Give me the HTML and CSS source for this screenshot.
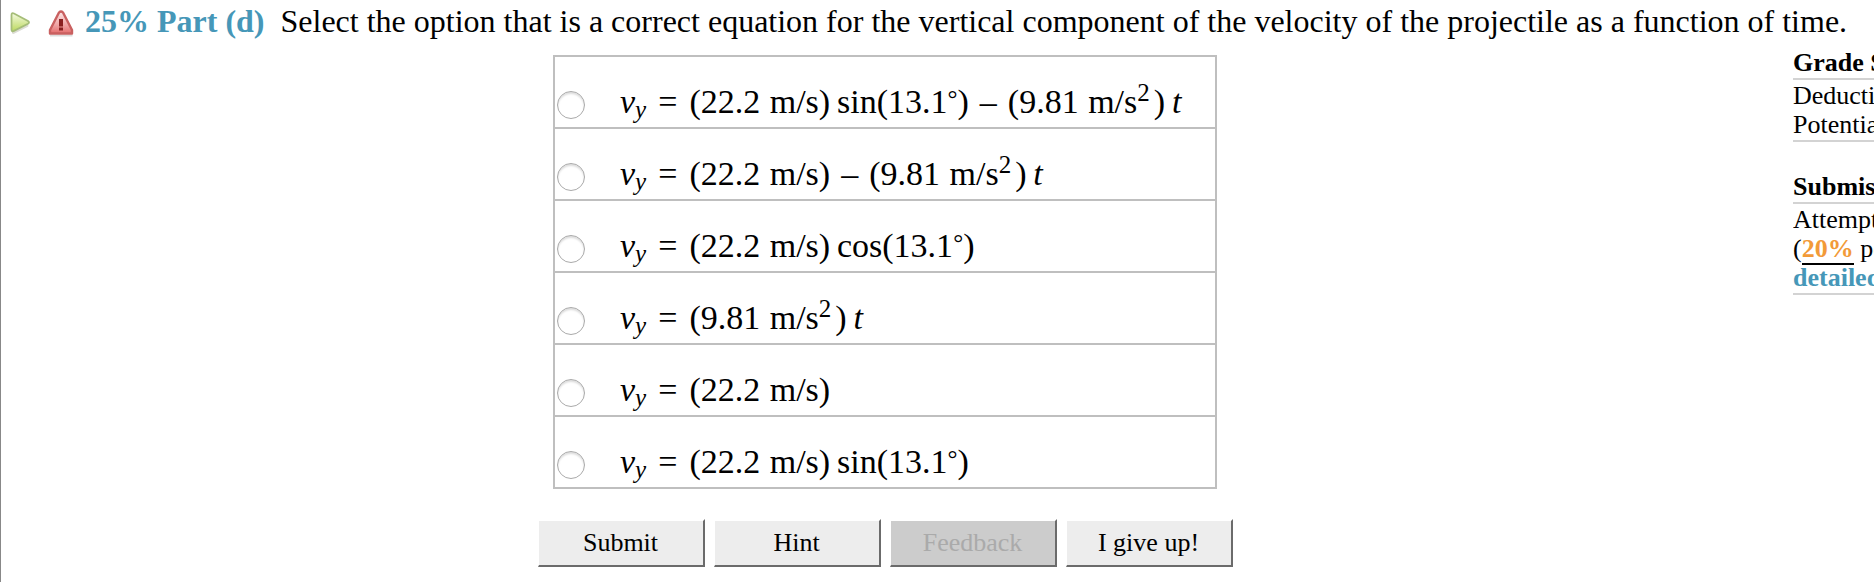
FILE: index.html
```
<!DOCTYPE html>
<html lang="en">
<head>
<meta charset="utf-8">
<title>Part (d)</title>
<link rel="stylesheet" href="styles.css">
</head>
<body>
<main class="problem">
	<h1 class="question">
		<svg class="icon-play" width="22" height="24" viewBox="0 0 22 24" aria-hidden="true">
			<defs>
				<linearGradient id="green" x1="0" y1="0" x2="0" y2="1"><stop offset="0" stop-color="#f4fae0"/><stop offset="1" stop-color="#bcd95f"/></linearGradient>
			</defs>
			<path d="M3 4.500V19.500Q3 21.500 5 20.700L18.500 14Q20.500 12.800 18.500 11.500L5 3Q3 2.500 3 4.500Z" fill="#dcdcd4" transform="translate(0 2)"/>
			<path d="M2.500 4V18.500Q2.500 21 5 19.900L19 12.800Q21 11.500 19 10L5 2.500Q2.500 1.500 2.500 4Z" fill="url(#green)" stroke="#a5bd78" stroke-width="1.800"/>
		</svg>
		<svg class="icon-warning" width="26" height="28" viewBox="0 0 26 28" aria-hidden="true">
			<defs>
				<linearGradient id="red" x1="0" y1="0" x2="0" y2="1"><stop offset="0" stop-color="#fbe9e9"/><stop offset=".6" stop-color="#f0a5a5"/><stop offset="1" stop-color="#e46c6c"/></linearGradient>
			</defs>
			<path d="M2 26.500H24.500" stroke="#ddd" stroke-width="2"/>
			<path d="M11 3.500Q13 1.500 15 3.500L24 21V24.500H2V21Z" fill="url(#red)" stroke="#c96060" stroke-width="2.400" stroke-linejoin="round"/>
			<path d="M11 10H15V17.500H11ZM11 18.500H15V21.500H11Z" fill="#8a2020"/>
		</svg>
		<span class="part">25% Part (d)</span>
		<span class="question-text">Select the option that is a correct equation for the vertical component of the velocity of the projectile as a function of time.</span>
	</h1>
	<div class="columns">
		<form class="answer">
			<div class="options">
				<label class="option">
					<input type="radio" name="answer">
					<span><i>v</i><sub>y</sub><span class="rel">=</span>(22.2 <span class="unit">m/s</span>)&thinsp;sin(13.1<span class="deg">°</span>)<span class="op">–</span>(9.81 <span class="unit">m/s<sup>2</sup></span>)&thinsp;<i>t</i></span>
				</label>
				<label class="option">
					<input type="radio" name="answer">
					<span><i>v</i><sub>y</sub><span class="rel">=</span>(22.2 <span class="unit">m/s</span>)<span class="op">–</span>(9.81 <span class="unit">m/s<sup>2</sup></span>)&thinsp;<i>t</i></span>
				</label>
				<label class="option">
					<input type="radio" name="answer">
					<span><i>v</i><sub>y</sub><span class="rel">=</span>(22.2 <span class="unit">m/s</span>)&thinsp;cos(13.1<span class="deg">°</span>)</span>
				</label>
				<label class="option">
					<input type="radio" name="answer">
					<span><i>v</i><sub>y</sub><span class="rel">=</span>(9.81 <span class="unit">m/s<sup>2</sup></span>)&thinsp;<i>t</i></span>
				</label>
				<label class="option">
					<input type="radio" name="answer">
					<span><i>v</i><sub>y</sub><span class="rel">=</span>(22.2 <span class="unit">m/s</span>)</span>
				</label>
				<label class="option">
					<input type="radio" name="answer">
					<span><i>v</i><sub>y</sub><span class="rel">=</span>(22.2 <span class="unit">m/s</span>)&thinsp;sin(13.1<span class="deg">°</span>)</span>
				</label>
			</div>
			<div class="buttons">
				<button type="button">Submit</button>
				<button type="button">Hint</button>
				<button type="button" disabled>Feedback</button>
				<button type="button">I give up!</button>
			</div>
		</form>
		<aside class="summary">
			<h2>Grade Summary</h2>
			<p>Deductions<br>Potential</p>
			<h2>Submissions</h2>
			<p>Attempts<br>(<b class="percent">20%</b> per attempt)<br><a href="#">detailed view</a></p>
		</aside>
	</div>
</main>
</body>
</html>
```
FILE: styles.css
```
body {
	margin: 0;
	background: #fff;
	color: #000;
	font-family: "Liberation Serif", "Times New Roman", serif;
	overflow: hidden;
}
.problem {
	border-left: 1px solid #888;
	min-height: 100vh;
}
.question {
	display: flex;
	align-items: center;
	margin: 0;
	padding-left: 8px;
	height: 42px;
	font-size: 32px;
	font-weight: normal;
	white-space: nowrap;
}
.icon-play {
	margin: 4px 17px 0 0;
}
.icon-warning {
	margin: 4px 11px 0 0;
}
.part {
	margin-right: 16px;
	color: #4697b8;
	font-weight: bold;
}
.columns {
	display: grid;
	grid-template-columns: 1fr 81px;
	column-gap: 24px;
}
.answer {
	display: flex;
	flex-direction: column;
	align-items: center;
	padding-top: 13px;
}
.options {
	width: 660px;
	border: 2px solid #bfbfbf;
}
.option {
	display: flex;
	align-items: center;
	height: 70px;
	padding: 0 2px;
	font-size: 34px;
	line-height: 40px;
	white-space: nowrap;
}
.option + .option {
	border-top: 2px solid #bfbfbf;
}
.option > span {
	height: 40px;
	padding-top: 20px;
}
.option input {
	appearance: none;
	width: 28px;
	height: 28px;
	margin: 26px 35px 0 0;
	border: 1px solid #aaa;
	border-radius: 50%;
	box-shadow: inset 0 2px 2px #ddd;
}
sub, sup {
	font-size: 25px;
	line-height: 0;
}
sub {
	font-style: italic;
	vertical-align: -5px;
}
sup {
	vertical-align: 12px;
	margin-right: 4px;
}
.unit {
	margin-left: 1px;
}
.rel {
	margin: 0 12px;
}
.op {
	margin: 0 11px;
}
.deg {
	font-size: 25px;
	line-height: 0;
	vertical-align: 6px;
}
.buttons {
	display: flex;
	gap: 9px;
	margin-top: 30px;
}
.buttons button {
	width: 167px;
	height: 48px;
	border: 2px solid;
	border-color: #fff #6b6b6b #6b6b6b #fff;
	border-left-width: 1px;
	background: #ededed;
	color: #000;
	font-family: inherit;
	font-size: 26px;
}
.buttons button:disabled {
	background: #ccc;
	color: #aaa;
}
.summary {
	overflow: hidden;
	padding-top: 6px;
	font-size: 26px;
	line-height: 29px;
	white-space: nowrap;
}
.summary h2 {
	margin: 0;
	padding-bottom: 1px;
	border-bottom: 2px solid #d3d3d3;
	font-size: 26px;
}
.summary p {
	margin: 0 0 30px;
	padding: 1px 0;
	border-bottom: 2px solid #d3d3d3;
}
.percent {
	border-bottom: 2px solid #000;
	color: #f29a38;
}
.summary a {
	color: #4697b8;
	font-weight: bold;
	text-decoration: none;
}
```
